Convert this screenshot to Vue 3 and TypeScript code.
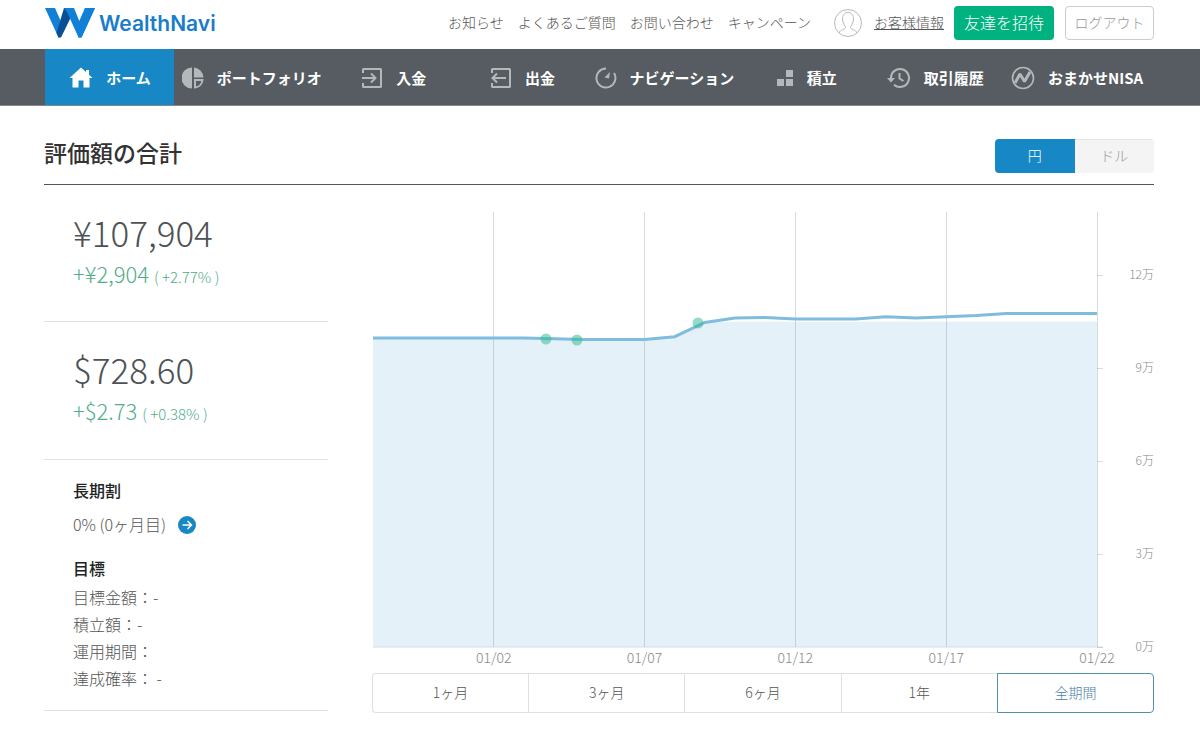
<script setup lang="ts">
import { computed, ref } from 'vue'

type IconName = 'home' | 'portfolio' | 'deposit' | 'withdraw' | 'navigation' | 'reserve' | 'history' | 'nisa'

interface NavItem {
  label: string
  icon: IconName
}

const links: string[] = ['お知らせ', 'よくあるご質問', 'お問い合わせ', 'キャンペーン']

const navItems: NavItem[] = [
  { label: 'ホーム', icon: 'home' },
  { label: 'ポートフォリオ', icon: 'portfolio' },
  { label: '入金', icon: 'deposit' },
  { label: '出金', icon: 'withdraw' },
  { label: 'ナビゲーション', icon: 'navigation' },
  { label: '積立', icon: 'reserve' },
  { label: '取引履歴', icon: 'history' },
  { label: 'おまかせNISA', icon: 'nisa' },
]
const activeNav = ref<IconName>('home')

const totals = [
  { amount: '¥107,904', change: '+¥2,904', rate: '( +2.77% )' },
  { amount: '$728.60', change: '+$2.73', rate: '( +0.38% )' },
]

const goals: string[] = ['目標金額：-', '積立額：-', '運用期間：', '達成確率： -']

const currencies: string[] = ['円', 'ドル']
const currency = ref('円')

const periods: string[] = ['1ヶ月', '3ヶ月', '6ヶ月', '1年', '全期間']
const period = ref('全期間')

/* Chart geometry: one value per day, in units of 万円 */
const left = 1
const right = 725
const base = 435
const perUnit = 31
const days = 24
const values: number[] = [
  9.97, 9.97, 9.97, 9.97, 9.97, 9.97, 9.94, 9.92, 9.92, 9.92, 10.01, 10.47, 10.61,
  10.63, 10.58, 10.58, 10.58, 10.65, 10.61, 10.65, 10.69, 10.76, 10.76, 10.76, 10.76,
]
const x = (day: number): number => left + ((right - left) * day) / days
const y = (value: number): number => base - value * perUnit

const linePoints = computed(() => values.map((v, i) => `${x(i)},${y(v)}`).join(' '))
const areaPoints = computed(() => {
  const top = values.map((v, i) => `${x(i)},${y(Math.min(v, 10.49))}`).join(' ')
  return `${left},${base} ${top} ${right},${base}`
})

const dateTicks = [
  { day: 4, label: '01/02' },
  { day: 9, label: '01/07' },
  { day: 14, label: '01/12' },
  { day: 19, label: '01/17' },
  { day: 24, label: '01/22' },
]
const valueTicks: number[] = [12, 9, 6, 3, 0]
const deposits = [
  { cx: 174, cy: 127 },
  { cx: 205, cy: 128 },
  { cx: 326, cy: 111 },
]
</script>

<template>
  <div class="page">
    <header class="topbar">
      <a class="logo" href="#" aria-label="WealthNavi">
        <svg width="50" height="30" viewBox="0 0 50 30" aria-hidden="true">
          <path d="M0 0H10L17 16L14.500 29.500H13.500Z" fill="#1181d8" />
          <path d="M19 0H24L26 9L16 29.500H13.500L11.500 25Z" fill="#084f94" />
          <path d="M19 0H29L35.500 16L40 0H50L36.500 29.500H33.500L22.500 5Z" fill="#1181d8" />
          <path d="M32 18L40 0H50L36.500 29.500H33.500Z" fill="#1181d8" />
        </svg>
        <span>WealthNavi</span>
      </a>
      <div class="utility">
        <a v-for="link in links" :key="link" class="link" href="#">{{ link }}</a>
        <a class="account" href="#">
          <svg width="30" height="30" viewBox="0 0 30 30" fill="none" stroke="#b9b9b9" aria-hidden="true">
            <circle cx="15" cy="15" r="13.500" />
            <path d="M6 25C7 21.500 12.500 21.500 12.500 19.500C12.500 17.500 9.500 15.500 9.500 11C9.500 7 11.500 4.500 15 4.500S20.500 7 20.500 11C20.500 15.500 17.500 17.500 17.500 19.500C17.500 21.500 23 21.500 24 25" />
          </svg>
          <span>お客様情報</span>
        </a>
        <button class="invite" type="button">友達を招待</button>
        <button class="logout" type="button">ログアウト</button>
      </div>
    </header>

    <nav class="nav">
      <a
        v-for="item in navItems"
        :key="item.icon"
        href="#"
        class="nav-item"
        :class="{ active: item.icon === activeNav }"
        @click.prevent="activeNav = item.icon"
      >
        <svg v-if="item.icon === 'home'" width="24" height="24" viewBox="0 0 24 24" aria-hidden="true">
          <path d="M12 1.500L0.500 12H3.500V21.500H9.500V14.500H14.500V21.500H20.500V12H23.500L20 8.800V4H17V6Z" fill="#fff" />
        </svg>
        <svg v-else-if="item.icon === 'portfolio'" width="22" height="22" viewBox="0 0 22 22" fill="#b5b8bb" aria-hidden="true">
          <path d="M10 0.500A10.500 10.500 0 0 0 10 21.500Z" />
          <path d="M12 0.500A10.500 10.500 0 0 1 21.500 10.500H12Z" />
          <path d="M13 13H20.500A8.500 8.500 0 0 1 13 20.500Z" fill="none" stroke="#b5b8bb" stroke-width="2" />
        </svg>
        <svg v-else-if="item.icon === 'deposit'" width="22" height="22" viewBox="0 0 22 22" fill="none" stroke="#b5b8bb" stroke-width="2" aria-hidden="true">
          <path d="M2 6V2.500Q2 2 2.500 2H19.500Q20 2 20 2.500V19.500Q20 20 19.500 20H2.500Q2 20 2 19.500V16M1 11H14.500M10 6.500L14.500 11L10 15.500" />
        </svg>
        <svg v-else-if="item.icon === 'withdraw'" width="22" height="22" viewBox="0 0 22 22" fill="none" stroke="#b5b8bb" stroke-width="2" aria-hidden="true">
          <path d="M2 6V2.500Q2 2 2.500 2H19.500Q20 2 20 2.500V19.500Q20 20 19.500 20H2.500Q2 20 2 19.500V16M16 11H2.500M7 6.500L2.500 11L7 15.500" />
        </svg>
        <svg v-else-if="item.icon === 'navigation'" width="22" height="22" viewBox="0 0 22 22" fill="none" aria-hidden="true">
          <path d="M11 1.500A9.500 9.500 0 1 0 19 6" stroke="#b5b8bb" stroke-width="2" />
          <path d="M15 5L14 11.500L9.500 10.500Z" fill="#b5b8bb" />
        </svg>
        <svg v-else-if="item.icon === 'reserve'" width="18" height="18" viewBox="0 0 18 18" fill="#b5b8bb" aria-hidden="true">
          <path d="M10 1H17V8H10ZM1 10H8V17H1ZM10 10H17V17H10Z" />
        </svg>
        <svg v-else-if="item.icon === 'history'" width="24" height="22" viewBox="0 0 24 22" fill="none" aria-hidden="true">
          <path d="M4 11A9 9 0 1 1 7 17.700" stroke="#b5b8bb" stroke-width="2" />
          <path d="M0 11H8L4 15.500Z" fill="#b5b8bb" />
          <path d="M12.500 6V11.500L16.500 14" stroke="#b5b8bb" stroke-width="2" />
        </svg>
        <svg v-else width="24" height="24" viewBox="0 0 24 24" fill="none" stroke="#b5b8bb" aria-hidden="true">
          <circle cx="12" cy="12" r="10.500" stroke-width="1.600" />
          <path d="M4 17L9 8L13.500 15.500L19 6" stroke-width="3" stroke-linejoin="bevel" />
        </svg>
        <span>{{ item.label }}</span>
      </a>
    </nav>

    <main class="content">
      <div class="heading">
        <h1>評価額の合計</h1>
        <div class="toggle" role="group" aria-label="通貨">
          <button
            v-for="c in currencies"
            :key="c"
            type="button"
            :class="{ active: c === currency }"
            :aria-pressed="c === currency"
            @click="currency = c"
          >{{ c }}</button>
        </div>
      </div>

      <div class="columns">
        <aside class="summary">
          <section v-for="t in totals" :key="t.amount" class="total">
            <p class="amount">{{ t.amount }}</p>
            <p class="change">{{ t.change }} <small>{{ t.rate }}</small></p>
          </section>
          <section class="details">
            <h2>長期割</h2>
            <p class="discount">
              <span>0% (0ヶ月目)</span>
              <a href="#" aria-label="長期割">
                <svg width="18" height="18" viewBox="0 0 18 18" fill="none" aria-hidden="true">
                  <circle cx="9" cy="9" r="9" fill="#1787c6" />
                  <path d="M4.500 9H13M9.500 5L13.500 9L9.500 13" stroke="#fff" stroke-width="1.500" />
                </svg>
              </a>
            </p>
            <h2>目標</h2>
            <ul>
              <li v-for="g in goals" :key="g">{{ g }}</li>
            </ul>
          </section>
        </aside>

        <section class="chart">
          <svg class="plot" viewBox="0 0 782 461" role="img" aria-label="評価額の合計">
            <polygon :points="areaPoints" fill="#e4f1f9" />
            <path :d="`M${left} ${base}H${right + 6}`" class="axis" />
            <g v-for="t in dateTicks" :key="t.label">
              <line :x1="Math.floor(x(t.day)) + 0.5" :x2="Math.floor(x(t.day)) + 0.5" y1="0" :y2="base" class="grid" />
              <text :x="x(t.day)" y="451" class="date">{{ t.label }}</text>
            </g>
            <g v-for="v in valueTicks" :key="v">
              <line :x1="right" :x2="right + 6" :y1="Math.round(y(v)) + 0.5" :y2="Math.round(y(v)) + 0.5" class="grid" />
              <text x="782" :y="y(v) + 4" class="value">{{ v }}万</text>
            </g>
            <polyline :points="linePoints" class="line" />
            <circle v-for="d in deposits" :key="d.cx" :cx="d.cx" :cy="d.cy" r="5.5" class="dot" />
          </svg>
          <div class="periods" role="group" aria-label="期間">
            <button
              v-for="p in periods"
              :key="p"
              type="button"
              :class="{ active: p === period }"
              :aria-pressed="p === period"
              @click="period = p"
            >{{ p }}</button>
          </div>
        </section>
      </div>
    </main>
  </div>
</template>

<style>
body {
  margin: 0;
  background: #fff;
}
</style>

<style scoped>
.page {
  font-family: "Noto Sans CJK JP", sans-serif;
  font-weight: 300;
  font-size: 14px;
  line-height: 20px;
  color: #555;
}
.page * {
  box-sizing: border-box;
}
h1,
h2,
p,
ul {
  margin: 0;
  padding: 0;
}
a {
  color: inherit;
  text-decoration: none;
}
button {
  font: inherit;
  padding: 0 0 2px;
  cursor: pointer;
}
svg {
  display: block;
  flex: none;
}
.topbar {
  display: flex;
  justify-content: space-between;
  align-items: center;
  height: 49px;
  padding: 0 46px 4px 45px;
}
.logo {
  display: flex;
  align-items: center;
  gap: 4px;
  font-family: Inter, sans-serif;
  font-weight: 600;
  font-size: 21px;
  color: #1a7ccb;
}
.logo span {
  padding-top: 2px;
}
.utility {
  display: flex;
  align-items: center;
  white-space: nowrap;
}
.link,
.account span {
  padding-bottom: 2px;
}
.link {
  margin-right: 14px;
}
.account {
  display: flex;
  align-items: center;
  gap: 11px;
  margin: 0 10px 0 8px;
}
.account span {
  text-decoration: underline;
}
.invite,
.logout {
  height: 34px;
  border-radius: 4px;
}
.invite {
  width: 100px;
  margin-right: 11px;
  border: 0;
  background: #00b27f;
  color: #fff;
  font-size: 16px;
}
.logout {
  width: 89px;
  border: 1px solid #ccc;
  background: #fff;
  color: #999;
}
.nav {
  display: grid;
  grid-template-columns: 5fr 6fr 5fr 5fr 6fr 5fr 5fr 6fr;
  height: 57px;
  padding: 0 46px 0 45px;
  background: #565c61;
  border-bottom: 1px solid #84888c;
}
.nav-item {
  display: flex;
  align-items: center;
  justify-content: center;
  gap: 13px;
  padding: 2px 0 0 1px;
  color: #fff;
  font-size: 15px;
  font-weight: 700;
  white-space: nowrap;
}
.nav-item.active {
  background: #1787c6;
}
.content {
  padding: 0 46px 0 44px;
}
.heading {
  display: flex;
  justify-content: space-between;
  align-items: flex-end;
  height: 79px;
  padding-bottom: 11px;
  border-bottom: 1px solid #555;
}
h1 {
  padding-bottom: 1px;
  font-size: 23px;
  line-height: 40px;
  font-weight: 500;
  color: #333;
}
.toggle {
  display: flex;
  width: 159px;
  height: 34px;
  border-radius: 4px;
  overflow: hidden;
}
.toggle button {
  flex: 1;
  border: 0;
  background: #f4f4f4;
  box-shadow: inset 0 1px 1px #e4e4e4;
  color: #999;
}
.toggle .active {
  background: #1787c6;
  box-shadow: none;
  color: #fff;
}
.columns {
  display: grid;
  grid-template-columns: 284px minmax(0, 1fr);
  gap: 44px;
  align-items: start;
}
.total {
  height: 138px;
  padding: 27px 0 0 29px;
  border-bottom: 1px solid #e3e3e3;
}
.total:first-child {
  height: 137px;
}
.amount {
  font-size: 35px;
  line-height: 40px;
  color: #4d5256;
}
.change {
  margin-top: 7px;
  font-size: 22px;
  line-height: 28px;
  color: #4fae85;
}
.change small {
  font-size: 15px;
}
.details {
  height: 251px;
  padding: 18px 0 0 29px;
  border-bottom: 1px solid #e3e3e3;
  font-size: 16px;
  line-height: 27px;
}
h2 {
  font-size: 16px;
  line-height: 24px;
  font-weight: 500;
  color: #222;
}
.discount {
  display: flex;
  align-items: center;
  gap: 12px;
  margin: 9px 0 18px;
}
ul {
  list-style: none;
  margin-top: 4px;
}
.chart {
  padding-top: 27px;
}
.plot {
  width: 100%;
  height: auto;
}
.axis {
  fill: none;
  stroke: #d5dce2;
  stroke-width: 1px;
}
.grid {
  stroke: #8c96a0;
  stroke-opacity: 0.35;
}
.line {
  fill: none;
  stroke: #7fbcdd;
  stroke-width: 3px;
}
.dot {
  fill: #2db891;
  fill-opacity: 0.5;
}
.date {
  fill: #888;
  text-anchor: middle;
}
.value {
  fill: #888;
  font-size: 12px;
  text-anchor: end;
}
.periods {
  display: flex;
  height: 40px;
}
.periods button {
  flex: 1;
  border: 1px solid #e0e0e0;
  border-right-width: 0;
  background: #fff;
  color: #555;
}
.periods button:first-child {
  border-radius: 4px 0 0 4px;
}
.periods button:last-child {
  border-right-width: 1px;
  border-radius: 0 4px 4px 0;
}
.periods .active {
  border-color: #4f90ab;
  color: #4a7fa8;
}
</style>
